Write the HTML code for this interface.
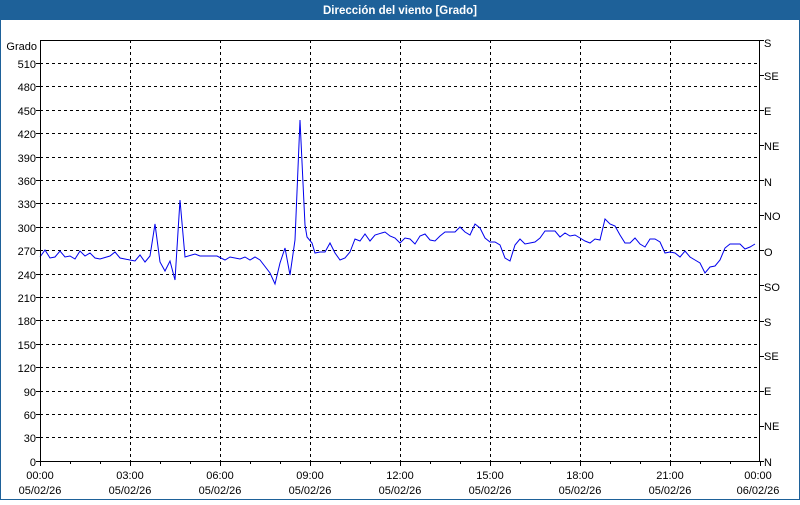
<!DOCTYPE html>
<html><head><style>
body{margin:0;width:800px;height:500px;overflow:hidden;background:#fff;font-family:"Liberation Sans",sans-serif;}
</style></head><body>
<svg width="800" height="500" xmlns="http://www.w3.org/2000/svg" font-family="Liberation Sans, sans-serif" font-size="11">
<rect x="0" y="0" width="800" height="500" fill="#fff"/>
<rect x="0.5" y="0.5" width="799" height="499" fill="none" stroke="#1e6199"/>
<rect x="0" y="0" width="800" height="20" fill="#1e6199"/>
<text x="400" y="14" fill="#fff" font-weight="bold" text-anchor="middle" font-size="11.5">Dirección del viento [Grado]</text>
<g stroke="#000" stroke-dasharray="3,3" stroke-width="1">
<line x1="40" x2="760" y1="63.5" y2="63.5"/><line x1="40" x2="760" y1="86.5" y2="86.5"/><line x1="40" x2="760" y1="110.5" y2="110.5"/><line x1="40" x2="760" y1="133.5" y2="133.5"/><line x1="40" x2="760" y1="157.5" y2="157.5"/><line x1="40" x2="760" y1="180.5" y2="180.5"/><line x1="40" x2="760" y1="203.5" y2="203.5"/><line x1="40" x2="760" y1="227.5" y2="227.5"/><line x1="40" x2="760" y1="250.5" y2="250.5"/><line x1="40" x2="760" y1="274.5" y2="274.5"/><line x1="40" x2="760" y1="297.5" y2="297.5"/><line x1="40" x2="760" y1="320.5" y2="320.5"/><line x1="40" x2="760" y1="344.5" y2="344.5"/><line x1="40" x2="760" y1="367.5" y2="367.5"/><line x1="40" x2="760" y1="391.5" y2="391.5"/><line x1="40" x2="760" y1="414.5" y2="414.5"/><line x1="40" x2="760" y1="437.5" y2="437.5"/>
<line x1="130.5" x2="130.5" y1="40" y2="461"/><line x1="220.5" x2="220.5" y1="40" y2="461"/><line x1="310.5" x2="310.5" y1="40" y2="461"/><line x1="400.5" x2="400.5" y1="40" y2="461"/><line x1="490.5" x2="490.5" y1="40" y2="461"/><line x1="580.5" x2="580.5" y1="40" y2="461"/><line x1="670.5" x2="670.5" y1="40" y2="461"/>
</g>
<polyline fill="none" stroke="#0000ee" stroke-width="1" points="40,257 45,250 50,258 55,257 60,251 65,257 70,256 75,259 80,251 85,256 90,253 95,258 100,259 110,256 115,252 120,258 130,260 135,261 140,255 145,262 150,256 155,224 160,262 165,271 170,261 175,280 180,200 185,257 195,254 200,256 217,256 225,260 230,257 240,259 245,257 250,260 255,257 260,260 270,273 275,284 280,263 285,248 290,275 295,240 300,120 305,225 307,237 312,243 315,253 320,252 325,252 330,243 335,253 340,260 345,258 350,252 355,239 360,241 365,234 370,241 375,235 385,232 390,236 395,238 400,243 405,238 410,239 415,244 420,236 425,234 430,240 435,241 440,236 445,232 455,232 460,227 465,232 470,235 475,224 480,228 485,238 490,242 495,242 500,245 505,258 510,261 515,245 520,239 525,244 530,243 535,242 540,238 545,231 555,231 560,237 565,233 570,236 575,235 580,238 585,241 590,243 595,239 600,240 605,219 610,224 615,226 620,235 625,243 630,243 635,238 640,244 645,247 650,239 655,239 660,242 665,253 670,252 675,253 680,257 685,251 690,257 695,260 700,263 705,273 710,267 715,266 720,260 725,248 730,244 740,244 745,249 750,247 755,244"/>
<rect x="40.5" y="40.5" width="719" height="421" fill="none" stroke="#000"/>
<g stroke="#000">
<line x1="36" x2="40" y1="63.5" y2="63.5"/><line x1="36" x2="40" y1="86.5" y2="86.5"/><line x1="36" x2="40" y1="110.5" y2="110.5"/><line x1="36" x2="40" y1="133.5" y2="133.5"/><line x1="36" x2="40" y1="157.5" y2="157.5"/><line x1="36" x2="40" y1="180.5" y2="180.5"/><line x1="36" x2="40" y1="203.5" y2="203.5"/><line x1="36" x2="40" y1="227.5" y2="227.5"/><line x1="36" x2="40" y1="250.5" y2="250.5"/><line x1="36" x2="40" y1="274.5" y2="274.5"/><line x1="36" x2="40" y1="297.5" y2="297.5"/><line x1="36" x2="40" y1="320.5" y2="320.5"/><line x1="36" x2="40" y1="344.5" y2="344.5"/><line x1="36" x2="40" y1="367.5" y2="367.5"/><line x1="36" x2="40" y1="391.5" y2="391.5"/><line x1="36" x2="40" y1="414.5" y2="414.5"/><line x1="36" x2="40" y1="437.5" y2="437.5"/><line x1="36" x2="40" y1="461.5" y2="461.5"/>
<line x1="760" x2="764" y1="40.5" y2="40.5"/><line x1="760" x2="764" y1="75.5" y2="75.5"/><line x1="760" x2="764" y1="110.5" y2="110.5"/><line x1="760" x2="764" y1="145.5" y2="145.5"/><line x1="760" x2="764" y1="180.5" y2="180.5"/><line x1="760" x2="764" y1="215.5" y2="215.5"/><line x1="760" x2="764" y1="250.5" y2="250.5"/><line x1="760" x2="764" y1="285.5" y2="285.5"/><line x1="760" x2="764" y1="321.5" y2="321.5"/><line x1="760" x2="764" y1="356.5" y2="356.5"/><line x1="760" x2="764" y1="391.5" y2="391.5"/><line x1="760" x2="764" y1="426.5" y2="426.5"/><line x1="760" x2="764" y1="461.5" y2="461.5"/>
</g>
<g stroke="#000">
<line x1="40.5" x2="40.5" y1="461" y2="466"/><line x1="70.5" x2="70.5" y1="461" y2="464"/><line x1="100.5" x2="100.5" y1="461" y2="464"/><line x1="130.5" x2="130.5" y1="461" y2="466"/><line x1="160.5" x2="160.5" y1="461" y2="464"/><line x1="190.5" x2="190.5" y1="461" y2="464"/><line x1="220.5" x2="220.5" y1="461" y2="466"/><line x1="250.5" x2="250.5" y1="461" y2="464"/><line x1="280.5" x2="280.5" y1="461" y2="464"/><line x1="310.5" x2="310.5" y1="461" y2="466"/><line x1="340.5" x2="340.5" y1="461" y2="464"/><line x1="370.5" x2="370.5" y1="461" y2="464"/><line x1="400.5" x2="400.5" y1="461" y2="466"/><line x1="430.5" x2="430.5" y1="461" y2="464"/><line x1="460.5" x2="460.5" y1="461" y2="464"/><line x1="490.5" x2="490.5" y1="461" y2="466"/><line x1="520.5" x2="520.5" y1="461" y2="464"/><line x1="550.5" x2="550.5" y1="461" y2="464"/><line x1="580.5" x2="580.5" y1="461" y2="466"/><line x1="610.5" x2="610.5" y1="461" y2="464"/><line x1="640.5" x2="640.5" y1="461" y2="464"/><line x1="670.5" x2="670.5" y1="461" y2="466"/><line x1="700.5" x2="700.5" y1="461" y2="464"/><line x1="730.5" x2="730.5" y1="461" y2="464"/><line x1="760.5" x2="760.5" y1="461" y2="466"/>
</g>
<g fill="#000" text-anchor="end">
<text x="37" y="50">Grado</text>
<text x="36" y="68">510</text><text x="36" y="91">480</text><text x="36" y="115">450</text><text x="36" y="138">420</text><text x="36" y="162">390</text><text x="36" y="185">360</text><text x="36" y="208">330</text><text x="36" y="232">300</text><text x="36" y="255">270</text><text x="36" y="279">240</text><text x="36" y="302">210</text><text x="36" y="325">180</text><text x="36" y="349">150</text><text x="36" y="372">120</text><text x="36" y="396">90</text><text x="36" y="419">60</text><text x="36" y="442">30</text><text x="36" y="466">0</text>
</g>
<g fill="#000">
<text x="764" y="47">S</text><text x="764" y="80">SE</text><text x="764" y="115">E</text><text x="764" y="150">NE</text><text x="764" y="186">N</text><text x="764" y="220">NO</text><text x="764" y="256">O</text><text x="764" y="291">SO</text><text x="764" y="326">S</text><text x="764" y="360">SE</text><text x="764" y="395">E</text><text x="764" y="430">NE</text><text x="764" y="466">N</text>
</g>
<g fill="#000" text-anchor="middle">
<text x="40" y="479">00:00</text><text x="40" y="494">05/02/26</text>
<text x="130" y="479">03:00</text><text x="130" y="494">05/02/26</text>
<text x="220" y="479">06:00</text><text x="220" y="494">05/02/26</text>
<text x="310" y="479">09:00</text><text x="310" y="494">05/02/26</text>
<text x="400" y="479">12:00</text><text x="400" y="494">05/02/26</text>
<text x="490" y="479">15:00</text><text x="490" y="494">05/02/26</text>
<text x="580" y="479">18:00</text><text x="580" y="494">05/02/26</text>
<text x="670" y="479">21:00</text><text x="670" y="494">05/02/26</text>
<text x="758" y="479">00:00</text><text x="758" y="494">06/02/26</text>
</g>
</svg>
</body></html>
